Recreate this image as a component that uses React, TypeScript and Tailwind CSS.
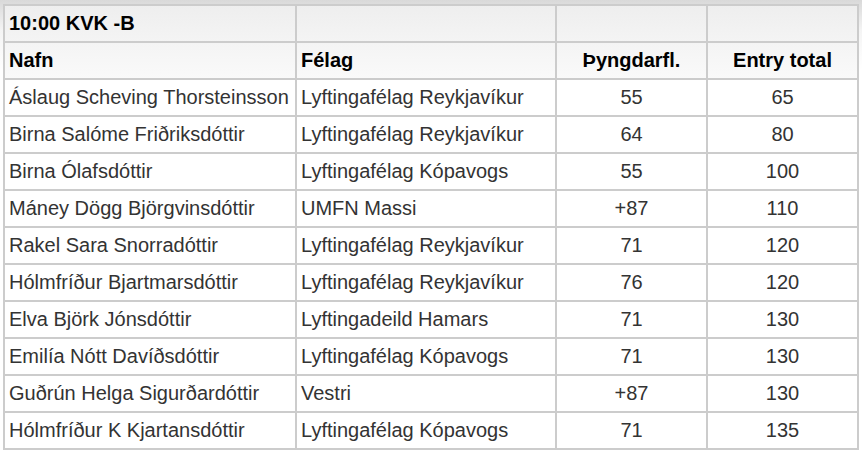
const rows: [string, string, string, string][] = [
  ['Áslaug Scheving Thorsteinsson', 'Lyftingafélag Reykjavíkur', '55', '65'],
  ['Birna Salóme Friðriksdóttir', 'Lyftingafélag Reykjavíkur', '64', '80'],
  ['Birna Ólafsdóttir', 'Lyftingafélag Kópavogs', '55', '100'],
  ['Máney Dögg Björgvinsdóttir', 'UMFN Massi', '+87', '110'],
  ['Rakel Sara Snorradóttir', 'Lyftingafélag Reykjavíkur', '71', '120'],
  ['Hólmfríður Bjartmarsdóttir', 'Lyftingafélag Reykjavíkur', '76', '120'],
  ['Elva Björk Jónsdóttir', 'Lyftingadeild Hamars', '71', '130'],
  ['Emilía Nótt Davíðsdóttir', 'Lyftingafélag Kópavogs', '71', '130'],
  ['Guðrún Helga Sigurðardóttir', 'Vestri', '+87', '130'],
  ['Hólmfríður K Kjartansdóttir', 'Lyftingafélag Kópavogs', '71', '135'],
];

const cell = 'border-2 border-[#cccccc] h-[37px] px-[4px] pt-0 pb-[2px] leading-none';

export default function App() {
  return (
    <div
      className="w-[862px] h-[453px] bg-[linear-gradient(to_bottom,#d9d9d9_0px,#f4f4f4_30px,#ffffff_70px)] pt-[4px] pl-[3px] text-[20px] text-[#333333]"
      style={{ fontFamily: '"Liberation Sans", Arial, sans-serif' }}
    >
      <table className="w-[854px] border-collapse table-fixed bg-white">
        <colgroup>
          <col className="w-[292px]" />
          <col className="w-[260px]" />
          <col className="w-[151px]" />
          <col className="w-[151px]" />
        </colgroup>
        <thead className="bg-[linear-gradient(to_bottom,#eeeeee,#fafafa)] text-black font-bold">
          <tr>
            <th className={`${cell} text-left`}>10:00 KVK -B</th>
            <th className={cell}></th>
            <th className={cell}></th>
            <th className={cell}></th>
          </tr>
          <tr>
            <th className={`${cell} text-left`}>Nafn</th>
            <th className={`${cell} text-left`}>Félag</th>
            <th className={`${cell} text-center`}>Þyngdarfl.</th>
            <th className={`${cell} text-center`}>Entry total</th>
          </tr>
        </thead>
        <tbody>
          {rows.map((r, i) => (
            <tr key={i}>
              <td className={`${cell} whitespace-nowrap`}>{r[0]}</td>
              <td className={`${cell} whitespace-nowrap`}>{r[1]}</td>
              <td className={`${cell} text-center`}>{r[2]}</td>
              <td className={`${cell} text-center`}>{r[3]}</td>
            </tr>
          ))}
        </tbody>
      </table>
    </div>
  );
}
